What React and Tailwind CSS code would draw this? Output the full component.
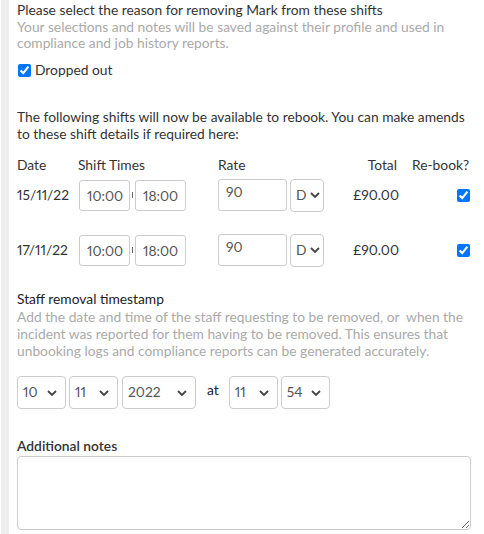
import React from "react";

const inputCls =
  "h-[31px] rounded-[3px] border border-[#cccccc] bg-white pl-[7px] pr-0 text-[13.8px] text-[#555555] outline-none proportional-nums";

function Chevron() {
  return (
    <svg width="10" height="6" viewBox="0 0 10 6" className="shrink-0">
      <path d="M1 1l4 4 4-4" fill="none" stroke="#444" strokeWidth="1.8" />
    </svg>
  );
}

function FakeSelect({ value, width, height = 33, padR = 8 }) {
  return (
    <div
      className="flex items-center justify-between rounded-[4px] border border-[#cccccc] bg-white pl-[5px] text-[13.8px] text-[#555555]"
      style={{ width, height, paddingRight: padR }}
    >
      <span>{value}</span>
      <Chevron />
    </div>
  );
}

function ShiftRow({ date }) {
  return (
    <div className="flex items-center h-[32px]">
      <div className="w-[62px] text-[13.8px] text-[#333333]">{date}</div>
      <input className={inputCls + " w-[51px]"} defaultValue="10:00" />
      <div className="w-[5px] flex justify-center">
        <div className="w-px h-[6px] bg-[#666]" />
      </div>
      <input className={inputCls + " w-[51px]"} defaultValue="18:00" />
      <div className="w-[32px]" />
      <input className={inputCls + " w-[69px] h-[32px] pt-0 pb-[8px]"} defaultValue="90" />
      <div className="w-[3px]" />
      <div className="flex items-center gap-[3px] h-[33px] w-[34px] rounded-[4px] border border-[#cccccc] bg-white pl-[5px] text-[13.8px] text-[#555555]">
        <span>D</span>
        <Chevron />
      </div>
      <div className="w-[75px] text-right text-[13.8px] text-[#333333]">£90.00</div>
      <div className="flex-1 flex justify-end pr-[4px]">
        <input type="checkbox" defaultChecked className="w-[13px] h-[13px] accent-[#0075ff]" />
      </div>
    </div>
  );
}

export default function App() {
  return (
    <div
      className="w-[484px] h-[534px] bg-white overflow-hidden pl-px proportional-nums"
      style={{ fontFamily: "Lato, 'Open Sans', sans-serif" }}
    >
      <div className="h-full border-l-[8px] border-[#eeeeee] pl-[8px] pr-[10px] pt-[2px]">
        <div className="text-[13.8px] leading-[16px] text-[#333333]">
          Please select the reason for removing Mark from these shifts
        </div>
        <div className="text-[13.8px] leading-[16px] text-[#aaaaaa] mt-[1px] pr-[4px]">
          Your selections and notes will be saved against their profile and used in compliance and job history reports.
        </div>
        <label className="flex items-center gap-[4px] mt-[11px] text-[13.8px] leading-[16px] text-[#333333]">
          <input type="checkbox" defaultChecked className="w-[13px] h-[13px] ml-[1px] accent-[#0075ff]" />
          <span>Dropped out</span>
        </label>

        <div className="mt-[30px] text-[13.8px] leading-[17px] text-[#333333]">
          The following shifts will now be available to rebook. You can make amends to these shift details if required here:
        </div>

        <div className="mt-[15px] flex text-[13.8px] leading-[16px] text-[#333333]">
          <div className="w-[61px]">Date</div>
          <div className="w-[140px]">Shift Times</div>
          <div className="w-[100px]">Rate</div>
          <div className="w-[79px] text-right">Total</div>
          <div className="pl-[15px]">Re-book?</div>
        </div>

        <div className="mt-[6px]">
          <ShiftRow date="15/11/22" />
        </div>
        <div className="mt-[23px]">
          <ShiftRow date="17/11/22" />
        </div>

        <div className="mt-[25px] text-[13.8px] leading-[16px] text-[#222222]">
          Staff removal timestamp
        </div>
        <div className="mt-[1px] pr-[4px] text-[13.8px] leading-[17px] text-[#aaaaaa]">
          Add the date and time of the staff requesting to be removed, or&nbsp; when the incident was reported for them having to be removed. This ensures that unbooking logs and compliance reports can be generated accurately.
        </div>

        <div className="mt-[17px] flex items-center">
          <FakeSelect value="10" width={49} />
          <div className="w-[3px]" />
          <FakeSelect value="11" width={49} />
          <div className="w-[4px]" />
          <FakeSelect value="2022" width={74} />
          <div className="w-[11px]" />
          <span className="text-[13.8px] text-[#222222] pb-[4px]">at</span>
          <div className="w-[10px]" />
          <FakeSelect value="11" width={49} />
          <div className="w-[3px]" />
          <FakeSelect value="54" width={49} />
        </div>

        <div className="mt-[29px] text-[13.8px] leading-[16px] font-semibold text-[#333333]">
          Additional notes
        </div>
        <textarea className="mt-[2px] block w-[454px] h-[74px] rounded-[4px] border border-[#cccccc] bg-white outline-none" />
      </div>
    </div>
  );
}
